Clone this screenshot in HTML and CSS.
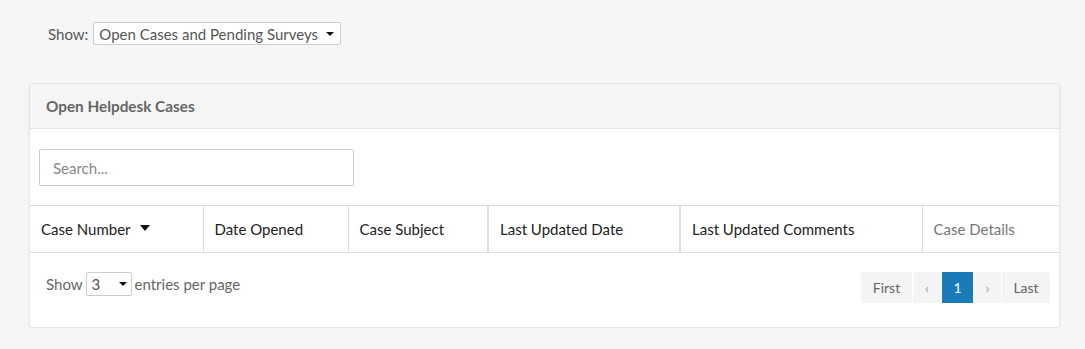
FILE: index.html
```html
<!DOCTYPE html>
<html lang="en">
<head>
    <meta charset="UTF-8">
    <title>Helpdesk Cases</title>
    <link rel="stylesheet" href="styles.css">
</head>
<body>
    <div class="filter-bar">
        <label for="show">Show:</label>
        <div class="select-box wide">
            <span>Open Cases and Pending Surveys</span>
            <span class="caret"></span>
        </div>
    </div>

    <div class="panel">
        <div class="panel-heading">Open Helpdesk Cases</div>
        <div class="panel-body">
            <input type="text" class="search" placeholder="Search...">
        </div>
        <table class="cases">
            <colgroup>
                <col style="width:173px">
                <col style="width:145px">
                <col style="width:140px">
                <col style="width:192px">
                <col style="width:242px">
                <col>
            </colgroup>
            <thead>
                <tr>
                    <th>Case Number <span class="sort"></span></th>
                    <th>Date Opened</th>
                    <th>Case Subject</th>
                    <th class="thick">Last Updated Date</th>
                    <th class="thick">Last Updated Comments</th>
                    <th class="muted">Case Details</th>
                </tr>
            </thead>
        </table>
        <div class="panel-footer">
            <div class="per-page">
                Show
                <div class="select-box small">
                    <span>3</span>
                    <span class="caret"></span>
                </div>
                entries per page
            </div>
            <ul class="pager">
                <li class="first">First</li>
                <li class="arrow">&lsaquo;</li>
                <li class="active">1</li>
                <li class="arrow next">&rsaquo;</li>
                <li class="last">Last</li>
            </ul>
        </div>
    </div>
</body>
</html>
```

FILE: styles.css
```css
body {
    font-family: Lato, "Open Sans", sans-serif;
    background: #f5f6f8;
    color: #333;
    margin: 0;
    padding: 0;
}

.filter-bar {
    display: flex;
    align-items: center;
    gap: 5px;
    padding: 22px 0 0 48px;
    font-size: 15px;
    color: #555;
}

.select-box {
    display: flex;
    align-items: center;
    justify-content: space-between;
    background: #fff;
    border: 1px solid #ccc;
    border-radius: 2px;
    font-size: 15px;
    color: #555;
    box-sizing: border-box;
}

.select-box.wide {
    width: 248px;
    height: 23px;
    padding: 0 6px 0 5px;
}

.select-box.small {
    width: 46px;
    height: 24px;
    padding: 0 4px 0 5px;
}

.caret {
    width: 0;
    height: 0;
    border-left: 4px solid transparent;
    border-right: 4px solid transparent;
    border-top: 4px solid #111;
}

.panel {
    margin: 38px 25px 0 29px;
    background: #fff;
    border: 1px solid #e6e6e6;
    border-radius: 3px;
    box-shadow: 0 1px 3px rgba(0, 0, 0, 0.06);
}

.panel-heading {
    background: #f5f5f5;
    border-bottom: 1px solid #e3e3e3;
    height: 44px;
    line-height: 44px;
    padding-left: 16px;
    font-size: 15.3px;
    font-weight: bold;
    color: #666;
}

.panel-body {
    padding: 20px 9px 19px 9px;
}

.search {
    width: 315px;
    height: 37px;
    box-sizing: border-box;
    border: 1px solid #ccc;
    border-radius: 2px;
    padding: 0 13px;
    font-family: inherit;
    font-size: 15px;
    color: #555;
}

.search::placeholder {
    color: #888;
}

.cases {
    width: 100%;
    border-collapse: collapse;
    table-layout: fixed;
}

.cases th {
    height: 46px;
    text-align: left;
    font-weight: normal;
    font-size: 15px;
    color: #222;
    padding: 0 11px;
    border-top: 1px solid #ddd;
    border-bottom: 1px solid #ddd;
    border-left: 1px solid #ddd;
}

.cases th:first-child {
    border-left: none;
}

.cases th.thick {
    border-left: 2px solid #ddd;
}

.cases th.muted {
    color: #777;
}

.sort {
    display: inline-block;
    vertical-align: middle;
    margin-left: 6px;
    margin-top: -6px;
    border-left: 5px solid transparent;
    border-right: 5px solid transparent;
    border-top: 6px solid #111;
}

.panel-footer {
    display: flex;
    justify-content: space-between;
    align-items: flex-start;
    padding: 19px 9px 24px 16px;
}

.per-page {
    display: flex;
    align-items: center;
    gap: 3px;
    font-size: 15px;
    color: #666;
}

.pager {
    list-style: none;
    display: flex;
    gap: 1px;
    margin: 0;
    padding: 0;
}

.pager li {
    height: 31px;
    line-height: 31px;
    text-align: center;
    background: #f4f4f4;
    color: #666;
    font-size: 14px;
}

.pager li.first {
    width: 51px;
    border-radius: 2px 0 0 2px;
}

.pager li.last {
    width: 48px;
    border-radius: 0 2px 2px 0;
}

.pager li.arrow {
    width: 28px;
    color: #999;
}

.pager li.next {
    width: 27px;
}

.pager li.active {
    width: 31px;
    background: #1a7bb9;
    color: #fff;
}
```
